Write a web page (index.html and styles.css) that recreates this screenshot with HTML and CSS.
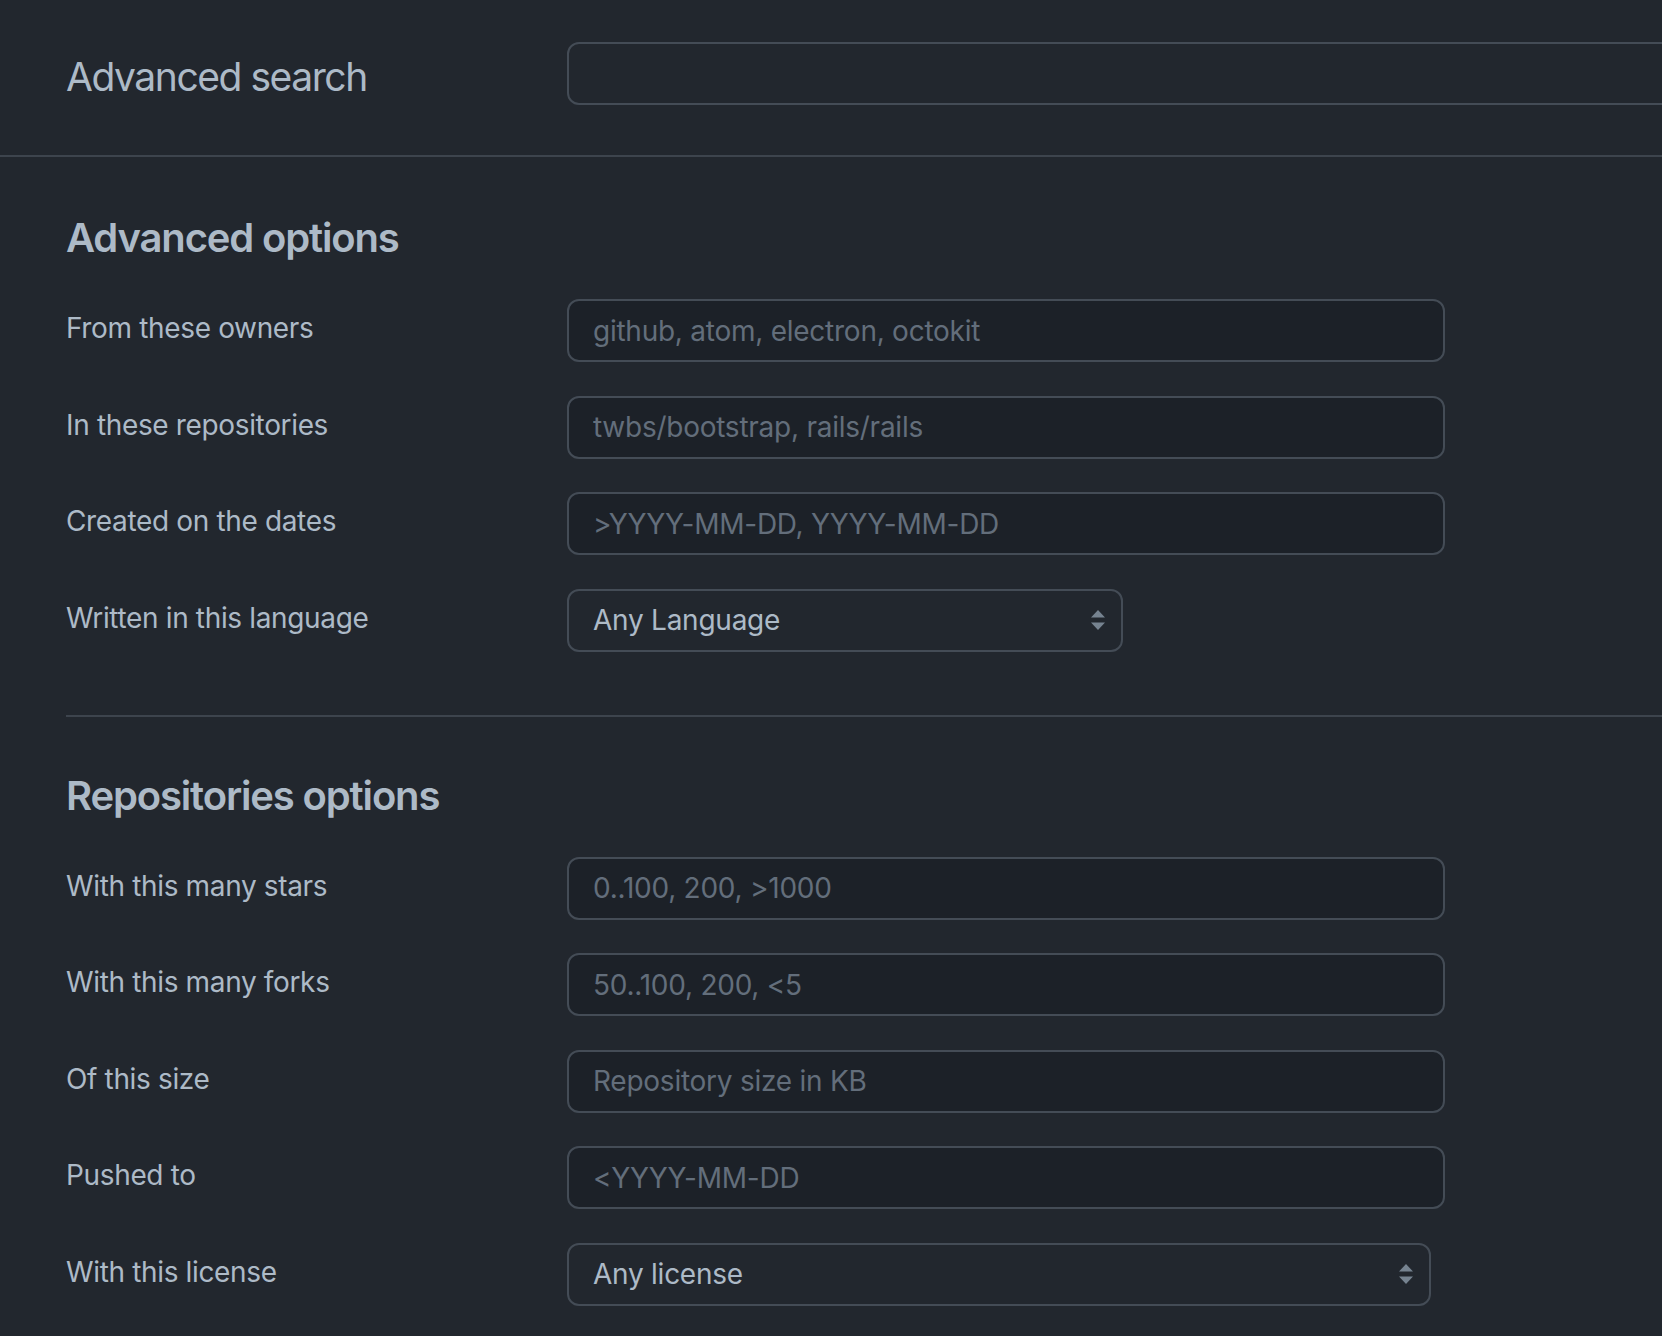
FILE: index.html
```html
<!DOCTYPE html>
<html lang="en">
<head>
<meta charset="utf-8">
<title>Advanced search</title>
<link rel="stylesheet" href="styles.css">
</head>
<body>
<div class="page">
  <header class="topbar">
    <h1 class="title">Advanced search</h1>
    <input class="search-input" type="text" aria-label="Advanced search">
  </header>

  <main class="main">
    <section class="section">
      <h2 class="section-title">Advanced options</h2>
      <div class="rows">
        <div class="row">
          <label class="label">From these owners</label>
          <input class="field" type="text" placeholder="github, atom, electron, octokit">
        </div>
        <div class="row">
          <label class="label">In these repositories</label>
          <input class="field" type="text" placeholder="twbs/bootstrap, rails/rails">
        </div>
        <div class="row">
          <label class="label">Created on the dates</label>
          <input class="field" type="text" placeholder="&gt;YYYY-MM-DD, YYYY-MM-DD">
        </div>
        <div class="row">
          <label class="label">Written in this language</label>
          <div class="select-wrap select-lang">
            <select class="select"><option>Any Language</option></select>
            <svg class="caret" width="14" height="20" viewBox="0 0 14 20"><path d="M7 0 L14 7.5 H0 Z M7 20 L14 12.5 H0 Z" fill="#768390"/></svg>
          </div>
        </div>
      </div>
    </section>

    <section class="section section-bordered">
      <h2 class="section-title">Repositories options</h2>
      <div class="rows">
        <div class="row">
          <label class="label">With this many stars</label>
          <input class="field" type="text" placeholder="0..100, 200, &gt;1000">
        </div>
        <div class="row">
          <label class="label">With this many forks</label>
          <input class="field" type="text" placeholder="50..100, 200, &lt;5">
        </div>
        <div class="row">
          <label class="label">Of this size</label>
          <input class="field" type="text" placeholder="Repository size in KB">
        </div>
        <div class="row">
          <label class="label">Pushed to</label>
          <input class="field" type="text" placeholder="&lt;YYYY-MM-DD">
        </div>
        <div class="row">
          <label class="label">With this license</label>
          <div class="select-wrap select-license">
            <select class="select"><option>Any license</option></select>
            <svg class="caret" width="14" height="20" viewBox="0 0 14 20"><path d="M7 0 L14 7.5 H0 Z M7 20 L14 12.5 H0 Z" fill="#768390"/></svg>
          </div>
        </div>
      </div>
    </section>
  </main>
</div>
</body>
</html>
```

FILE: styles.css
```css
html, body {
  margin: 0;
  padding: 0;
  background: #22272e;
}

body {
  font-family: Inter, "Noto Sans", "Liberation Sans", sans-serif;
  color: #adbac7;
  overflow: hidden;
}

.page {
  width: 100%;
  overflow: hidden;
}

.topbar {
  display: flex;
  align-items: center;
  padding: 42px 0 50px 66px;
  border-bottom: 2px solid #3d444d;
}

.title {
  flex: 0 0 501px;
  margin: 0;
  font-size: 39px;
  font-weight: 400;
  letter-spacing: -1.45px;
  line-height: 50px;
  color: #adbac7;
  position: relative;
  top: 3px;
}

.search-input {
  flex: 0 0 auto;
  width: 1300px;
  height: 63px;
  box-sizing: border-box;
  border: 2px solid #444c56;
  border-radius: 12px;
  background: #22272e;
  outline: none;
}

.main {
  padding-left: 66px;
}

.section {
  padding-top: 56px;
  padding-bottom: 63px;
}

.section-bordered {
  border-top: 2px solid #3d444d;
  padding-top: 54px;
}

.section-title {
  margin: 0 0 36px 0;
  font-size: 40px;
  font-weight: 600;
  letter-spacing: -1.15px;
  line-height: 50px;
  color: #adbac7;
}

.rows {
  display: flex;
  flex-direction: column;
  gap: 33.5px;
}

.row {
  display: flex;
  align-items: center;
}

.label {
  flex: 0 0 501px;
  font-size: 28px;
  letter-spacing: -0.35px;
  line-height: 42px;
  color: #adbac7;
  padding-bottom: 5px;
}

.field {
  width: 878px;
  height: 63px;
  box-sizing: border-box;
  border: 2px solid #444c56;
  border-radius: 12px;
  background: #1c2128;
  padding: 0 24px;
  font-family: Inter, "Noto Sans", "Liberation Sans", sans-serif;
  font-size: 28px;
  letter-spacing: -0.25px;
  color: #adbac7;
  outline: none;
}

.field::placeholder {
  color: #636e7b;
}

.select-wrap {
  position: relative;
  height: 63px;
}

.select-lang {
  width: 556px;
}

.select-license {
  width: 864px;
}

.select {
  -webkit-appearance: none;
  appearance: none;
  width: 100%;
  height: 63px;
  box-sizing: border-box;
  border: 2px solid #444c56;
  border-radius: 12px;
  background: #22272e;
  padding: 0 24px;
  font-family: Inter, "Noto Sans", "Liberation Sans", sans-serif;
  font-size: 28px;
  letter-spacing: -0.25px;
  color: #adbac7;
  outline: none;
}

.caret {
  position: absolute;
  right: 18px;
  top: 21px;
  pointer-events: none;
}
```
